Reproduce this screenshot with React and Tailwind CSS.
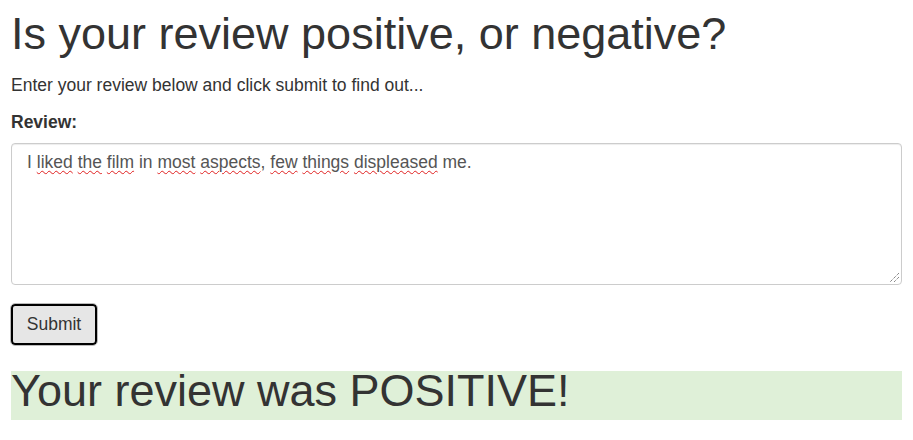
const words = [
  ["I", false],
  ["liked", true],
  ["the", true],
  ["film", true],
  ["in", false],
  ["most", true],
  ["aspects", true, ","],
  ["few", true],
  ["things", true],
  ["displeased", true],
  ["me.", false],
];

const Grip = () => (
  <svg width="12" height="12" viewBox="0 0 12 12" className="absolute right-[1px] bottom-[1px]">
    <line x1="11" y1="2" x2="2" y2="11" stroke="#555" strokeWidth="1" strokeDasharray="1 1" />
    <line x1="11" y1="6" x2="6" y2="11" stroke="#555" strokeWidth="1" strokeDasharray="1 1" />
  </svg>
);

export default function App() {
  return (
    <div className="min-h-[440px] bg-white px-[11px] text-[#333] font-['Liberation_Sans',Arial,sans-serif]">
      <h1 className="pt-[9px] text-[45px] leading-[1.1]">Is your review positive, or negative?</h1>
      <p className="mt-[14px] text-[17.5px] leading-[25px]">
        Enter your review below and click submit to find out...
      </p>
      <form className="mt-[12px]" onSubmit={(e) => e.preventDefault()}>
        <label className="block text-[17.5px] leading-[25px] font-bold">Review:</label>
        <div className="relative mt-[8px] h-[142px] rounded-[4px] border border-[#ccc] bg-white px-[15px] pt-[6px] text-[17.5px] leading-[25px] text-[#555] shadow-[inset_0_1px_1px_rgba(0,0,0,0.075)]">
          {words.map(([w, bad, tail], i) => (
            <span key={i}>
              <span className={bad ? "underline decoration-wavy decoration-[#e02020] decoration-1 underline-offset-[2px]" : ""}>
                {w}
              </span>
              {tail}
              {i < words.length - 1 ? " " : ""}
            </span>
          ))}
          <Grip />
        </div>
        <button
          type="submit"
          className="mt-[19px] h-[41px] w-[86px] rounded-[4px] border-2 border-black bg-[#e6e6e6] text-[17.5px] text-[#333] outline outline-1 outline-[#bbb]"
        >
          Submit
        </button>
      </form>
      <div className="mt-[26px] h-[49px] bg-[#dff0d8] text-[45px] leading-[40px]">
        Your review was POSITIVE!
      </div>
    </div>
  );
}
